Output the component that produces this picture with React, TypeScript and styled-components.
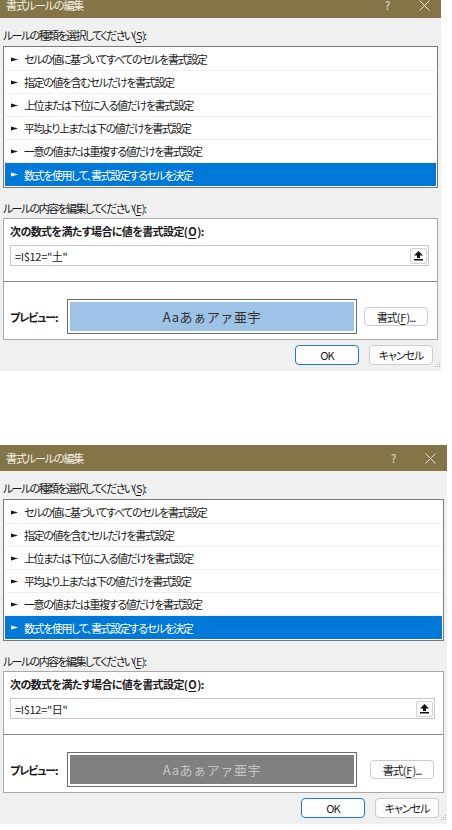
import React from 'react'
import styled, { createGlobalStyle } from 'styled-components'

const GlobalStyle = createGlobalStyle`
  html, body {
    margin: 0;
    padding: 0;
    background: #ffffff;
  }
  body {
    font-family: "Noto Sans CJK JP", "Noto Sans", sans-serif;
    font-size: 11px;
    letter-spacing: -1.1px;
    color: #1a1a1a;
    font-feature-settings: 'palt';
    overflow: hidden;
  }
`

const Page = styled.div`
  display: flex;
  flex-direction: column;
  gap: 74px;
  width: 452px;
  height: 830px;
  overflow: hidden;
`

const Dialog = styled.div<{ $width: number; $cropTop?: number }>`
  width: ${p => p.$width}px;
  margin-top: ${p => -(p.$cropTop || 0)}px;
  background: #f0f0f0;
  display: flex;
  flex-direction: column;
  flex-shrink: 0;
`

const TitleBar = styled.div`
  height: 26px;
  background: #847548;
  color: #f4f0e4;
  display: flex;
  align-items: center;
  padding-left: 6px;
`

const TitleText = styled.div`
  flex: 1;
`

const TitleButton = styled.div<{ $w: number }>`
  width: ${p => p.$w}px;
  height: 26px;
  display: flex;
  align-items: center;
  justify-content: center;
  color: #e8e3d2;
  font-size: 11px;
`

const Body = styled.div`
  padding: 0 3px;
  display: flex;
  flex-direction: column;
`

const SectionLabel = styled.div<{ $top: number; $bottom: number }>`
  padding: ${p => p.$top}px 0 ${p => p.$bottom}px;
  line-height: 18px;
  height: 18px;
  letter-spacing: -1.6px;
`

const Key = styled.span`
  text-decoration: underline;
  text-underline-offset: 2px;
  margin: 0 1px;
`

const RuleList = styled.div`
  border: 1px solid #7a7a7a;
  padding: 1px;
  background: #ffffff;
  display: flex;
  flex-direction: column;
`

const RuleRow = styled.div<{ $selected?: boolean }>`
  height: 23px;
  box-sizing: border-box;
  display: flex;
  align-items: center;
  padding-left: 6px;
  gap: 6px;
  letter-spacing: -1.4px;
  border-bottom: 1px solid ${p => (p.$selected ? '#0078d7' : '#f0f0f0')};
  background: ${p => (p.$selected ? '#0078d7' : '#ffffff')};
  color: ${p => (p.$selected ? '#ffffff' : '#1a1a1a')};
  &:last-child {
    border-bottom: none;
  }
`

const EditBox = styled.div`
  border: 1px solid #a9a9a9;
  background: #ffffff;
  display: flex;
  flex-direction: column;
`

const EditTop = styled.div`
  padding: 4px 8px 15px 6px;
  display: flex;
  flex-direction: column;
  gap: 5px;
  border-bottom: 1px solid #8a8a8a;
`

const BoldLabel = styled.div`
  font-weight: 700;
  line-height: 17px;
  letter-spacing: -0.6px;
`

const FormulaInput = styled.div`
  height: 21px;
  box-sizing: border-box;
  border: 1px solid #c8c8c8;
  display: flex;
  align-items: center;
  padding: 0 1px 0 4px;
`

const FormulaText = styled.div`
  flex: 1;
  letter-spacing: -0.3px;
`

const RefButton = styled.div`
  width: 17px;
  height: 16px;
  box-sizing: border-box;
  border: 1px solid #d2d2d2;
  border-radius: 2px;
  background: #fbfbfb;
  display: flex;
  align-items: center;
  justify-content: center;
`

const PreviewRow = styled.div`
  display: flex;
  align-items: center;
  padding: 17px 9px 5px 6px;
`

const PreviewLabel = styled.div`
  width: 57px;
  flex-shrink: 0;
  white-space: nowrap;
  font-weight: 700;
`

const PreviewFrame = styled.div`
  width: 290px;
  height: 35px;
  flex-shrink: 0;
  box-sizing: border-box;
  border: 1px solid #6c6c6c;
  padding: 2px;
  background: #ffffff;
  display: flex;
`

const PreviewFill = styled.div<{ $bg: string; $fg: string }>`
  flex: 1;
  background: ${p => p.$bg};
  color: ${p => p.$fg};
  display: flex;
  align-items: center;
  justify-content: center;
  font-size: 13px;
  letter-spacing: 0.6px;
  font-feature-settings: normal;
`

const Spacer = styled.div`
  flex: 1;
`

const PushButton = styled.button<{ $primary?: boolean }>`
  width: 64px;
  height: 20px;
  flex-shrink: 0;
  box-sizing: border-box;
  padding: 0;
  border: 1px solid ${p => (p.$primary ? '#1c78d0' : '#cdcdcd')};
  border-radius: 4px;
  background: #fdfdfd;
  font-family: inherit;
  font-size: 11px;
  letter-spacing: -1px;
  font-feature-settings: 'palt';
  color: #1a1a1a;
  display: flex;
  align-items: center;
  justify-content: center;
`

const FormatButton = styled(PushButton)`
  height: 19px;
`

const ButtonRow = styled.div`
  display: flex;
  justify-content: flex-end;
  gap: 10px;
  padding: 5px 8px 6px 0;
  position: relative;
`

const Grip = styled.div`
  position: absolute;
  right: 1px;
  bottom: 1px;
`

const Arrow = () => (
  <svg width="7" height="5" viewBox="0 0 7 5">
    <polygon points="0,0.5 7,2.5 0,4.5" fill="currentColor" />
    <rect x="0" y="2" width="4" height="1" fill="currentColor" />
  </svg>
)

const RefIcon = () => (
  <svg width="9" height="10" viewBox="0 0 9 10">
    <polygon points="4.5,0 9,4.5 6,4.5 6,7 3,7 3,4.5 0,4.5" fill="#111" />
    <rect x="0" y="8" width="9" height="1.5" fill="#111" />
  </svg>
)

const CloseIcon = () => (
  <svg width="11" height="11" viewBox="0 0 11 11">
    <path d="M0.5 0.5 L10.5 10.5 M10.5 0.5 L0.5 10.5" stroke="#ece7d6" strokeWidth="1" />
  </svg>
)

const GripDots = () => (
  <svg width="5" height="5" viewBox="0 0 5 5">
    <rect x="4" y="0" width="1" height="1" fill="#b5b5b5" />
    <rect x="2" y="2" width="1" height="1" fill="#b5b5b5" />
    <rect x="4" y="2" width="1" height="1" fill="#b5b5b5" />
    <rect x="0" y="4" width="1" height="1" fill="#b5b5b5" />
    <rect x="2" y="4" width="1" height="1" fill="#b5b5b5" />
    <rect x="4" y="4" width="1" height="1" fill="#b5b5b5" />
  </svg>
)

const rules = [
  'セルの値に基づいてすべてのセルを書式設定',
  '指定の値を含むセルだけを書式設定',
  '上位または下位に入る値だけを書式設定',
  '平均より上または下の値だけを書式設定',
  '一意の値または重複する値だけを書式設定',
  '数式を使用して、書式設定するセルを決定',
]

type RuleDialogProps = {
  width: number
  cropTop?: number
  formula: string
  previewBg: string
  previewFg: string
}

const RuleDialog = ({ width, cropTop, formula, previewBg, previewFg }: RuleDialogProps) => (
  <Dialog $width={width} $cropTop={cropTop}>
    <TitleBar>
      <TitleText>書式ルールの編集</TitleText>
      <TitleButton $w={40}>?</TitleButton>
      <TitleButton $w={34}>
        <CloseIcon />
      </TitleButton>
    </TitleBar>
    <Body>
      <SectionLabel $top={8} $bottom={2}>
        ルールの種類を選択してください(<Key>S</Key>):
      </SectionLabel>
      <RuleList>
        {rules.map((r, i) => (
          <RuleRow key={r} $selected={i === rules.length - 1}>
            <Arrow />
            <span>{r}</span>
          </RuleRow>
        ))}
      </RuleList>
      <SectionLabel $top={11} $bottom={1}>
        ルールの内容を編集してください(<Key>E</Key>):
      </SectionLabel>
      <EditBox>
        <EditTop>
          <BoldLabel>
            次の数式を満たす場合に値を書式設定(<Key>O</Key>):
          </BoldLabel>
          <FormulaInput>
            <FormulaText>{formula}</FormulaText>
            <RefButton>
              <RefIcon />
            </RefButton>
          </FormulaInput>
        </EditTop>
        <PreviewRow>
          <PreviewLabel>プレビュー:</PreviewLabel>
          <PreviewFrame>
            <PreviewFill $bg={previewBg} $fg={previewFg}>
              Aaあぁアァ亜宇
            </PreviewFill>
          </PreviewFrame>
          <Spacer />
          <FormatButton>
            書式(<Key>F</Key>)...
          </FormatButton>
        </PreviewRow>
      </EditBox>
    </Body>
    <ButtonRow>
      <PushButton $primary>OK</PushButton>
      <PushButton>キャンセル</PushButton>
      <Grip>
        <GripDots />
      </Grip>
    </ButtonRow>
  </Dialog>
)

const App = () => (
  <>
    <GlobalStyle />
    <Page>
      <RuleDialog width={441} cropTop={8} formula={'=I$12="土"'} previewBg="#9dc3e6" previewFg="#333333" />
      <RuleDialog width={447} formula={'=I$12="日"'} previewBg="#808080" previewFg="#c4c4c4" />
    </Page>
  </>
)

export default App
